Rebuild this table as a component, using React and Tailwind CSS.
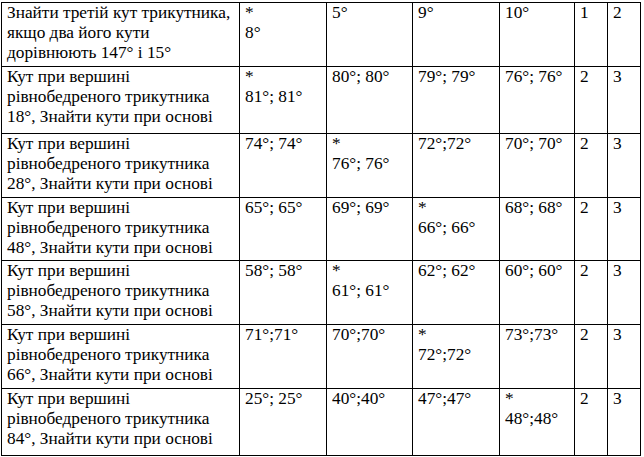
import React from 'react';

const rows = [
  {
    task: ['Знайти третій кут трикутника,', 'якщо два його кути', 'дорівнюють 147° і 15°'],
    answers: [['*', '8°'], ['5°'], ['9°'], ['10°']],
    a: '1',
    b: '2',
    h: 'h-[64px]',
  },
  {
    task: ['Кут при вершині', 'рівнобедреного трикутника', '18°, Знайти кути при основі'],
    answers: [['*', '81°; 81°'], ['80°; 80°'], ['79°; 79°'], ['76°; 76°']],
    a: '2',
    b: '3',
    h: 'h-[67px]',
  },
  {
    task: ['Кут при вершині', 'рівнобедреного трикутника', '28°, Знайти кути при основі'],
    answers: [['74°; 74°'], ['*', '76°; 76°'], ['72°;72°'], ['70°; 70°']],
    a: '2',
    b: '3',
    h: 'h-[64px]',
  },
  {
    task: ['Кут при вершині', 'рівнобедреного трикутника', '48°, Знайти кути при основі'],
    answers: [['65°; 65°'], ['69°; 69°'], ['*', '66°; 66°'], ['68°; 68°']],
    a: '2',
    b: '3',
    h: 'h-[63px]',
  },
  {
    task: ['Кут при вершині', 'рівнобедреного трикутника', '58°, Знайти кути при основі'],
    answers: [['58°; 58°'], ['*', '61°; 61°'], ['62°; 62°'], ['60°; 60°']],
    a: '2',
    b: '3',
    h: 'h-[64px]',
  },
  {
    task: ['Кут при вершині', 'рівнобедреного трикутника', '66°, Знайти кути при основі'],
    answers: [['71°;71°'], ['70°;70°'], ['*', '72°;72°'], ['73°;73°']],
    a: '2',
    b: '3',
    h: 'h-[64px]',
  },
  {
    task: ['Кут при вершині', 'рівнобедреного трикутника', '84°, Знайти кути при основі'],
    answers: [['25°; 25°'], ['40°;40°'], ['47°;47°'], ['*', '48°;48°']],
    a: '2',
    b: '3',
    h: 'h-[67px]',
  },
];

const Lines = ({ lines }) => (
  <>
    {lines.map((line, i) => (
      <div key={i}>{line}</div>
    ))}
  </>
);

const cell = 'border border-black align-top pl-[5px] pt-0';

export default function App() {
  return (
    <div className="w-[644px] h-[457px] overflow-hidden bg-white pt-[2px] pl-px font-['Liberation_Serif','Times_New_Roman',serif]">
      <table className="table-fixed border-collapse w-[639px] text-[17.3px] leading-[1.15] text-black">
        <colgroup>
          <col className="w-[238px]" />
          <col className="w-[87px]" />
          <col className="w-[86px]" />
          <col className="w-[87px]" />
          <col className="w-[75px]" />
          <col className="w-[33px]" />
          <col className="w-[33px]" />
        </colgroup>
        <tbody>
          {rows.map((row, i) => (
            <tr key={i} className={row.h}>
              <td className={cell}>
                <Lines lines={row.task} />
              </td>
              {row.answers.map((ans, j) => (
                <td key={j} className={cell}>
                  <Lines lines={ans} />
                </td>
              ))}
              <td className={cell}>{row.a}</td>
              <td className={cell}>{row.b}</td>
            </tr>
          ))}
        </tbody>
      </table>
    </div>
  );
}
